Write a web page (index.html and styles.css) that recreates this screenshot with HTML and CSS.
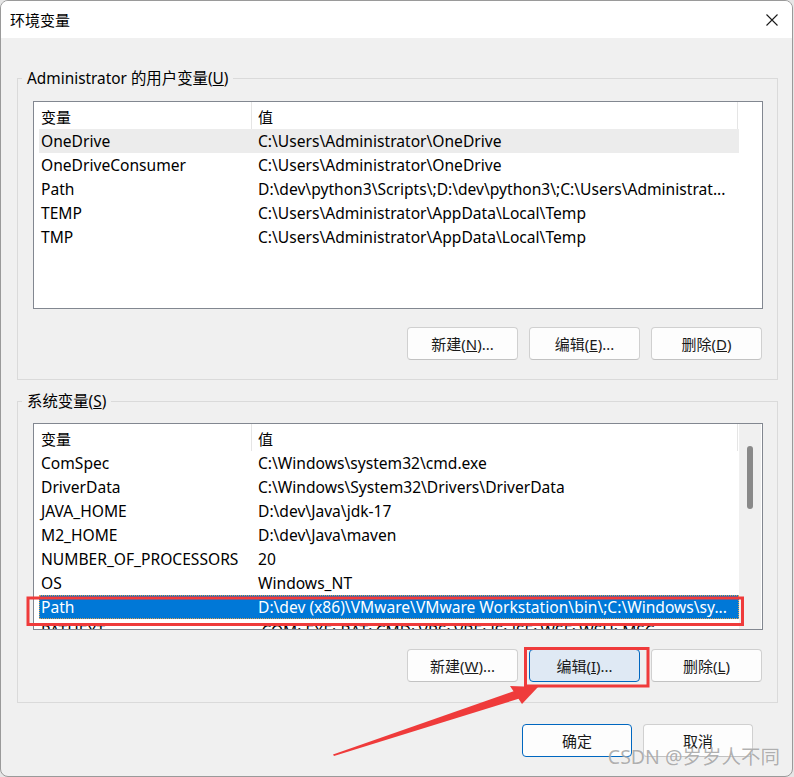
FILE: index.html
```html
<!DOCTYPE html>
<html lang="zh-CN">
<head>
<meta charset="utf-8">
<title>环境变量</title>
<link rel="stylesheet" href="styles.css">
</head>
<body>
<div class="window">
  <div class="titlebar">
    <span class="title">环境变量</span>
    <span class="close"><svg width="12" height="12" viewBox="0 0 12 12"><path d="M0.5 0.5 L11.5 11.5 M11.5 0.5 L0.5 11.5" stroke="#1a1a1a" stroke-width="1.1" fill="none"/></svg></span>
  </div>
  <div class="body">
    <fieldset class="group g1">
      <legend>Administrator 的用户变量(<u>U</u>)</legend>
      <div class="group-body">
        <div class="list l1">
          <div class="row head"><div class="c1">变量</div><div class="c2">值</div></div>
          <div class="row hover"><div class="c1">OneDrive</div><div class="c2">C:\Users\Administrator\OneDrive</div></div>
          <div class="row"><div class="c1">OneDriveConsumer</div><div class="c2">C:\Users\Administrator\OneDrive</div></div>
          <div class="row"><div class="c1">Path</div><div class="c2">D:\dev\python3\Scripts\;D:\dev\python3\;C:\Users\Administrat...</div></div>
          <div class="row"><div class="c1">TEMP</div><div class="c2">C:\Users\Administrator\AppData\Local\Temp</div></div>
          <div class="row"><div class="c1">TMP</div><div class="c2">C:\Users\Administrator\AppData\Local\Temp</div></div>
        </div>
        <div class="btns">
          <div class="btn">新建(<u>N</u>)...</div>
          <div class="btn">编辑(<u>E</u>)...</div>
          <div class="btn">删除(<u>D</u>)</div>
        </div>
      </div>
    </fieldset>
    <fieldset class="group g2">
      <legend>系统变量(<u>S</u>)</legend>
      <div class="group-body">
        <div class="list l2">
          <div class="list-content">
            <div class="row head"><div class="c1">变量</div><div class="c2">值</div></div>
            <div class="row"><div class="c1">ComSpec</div><div class="c2">C:\Windows\system32\cmd.exe</div></div>
            <div class="row"><div class="c1">DriverData</div><div class="c2">C:\Windows\System32\Drivers\DriverData</div></div>
            <div class="row"><div class="c1">JAVA_HOME</div><div class="c2">D:\dev\Java\jdk-17</div></div>
            <div class="row"><div class="c1">M2_HOME</div><div class="c2">D:\dev\Java\maven</div></div>
            <div class="row"><div class="c1">NUMBER_OF_PROCESSORS</div><div class="c2">20</div></div>
            <div class="row"><div class="c1">OS</div><div class="c2">Windows_NT</div></div>
            <div class="row selected"><div class="c1">Path</div><div class="c2">D:\dev (x86)\VMware\VMware Workstation\bin\;C:\Windows\sy...</div></div>
            <div class="row"><div class="c1">PATHEXT</div><div class="c2">.COM;.EXE;.BAT;.CMD;.VBS;.VBE;.JS;.JSE;.WSF;.WSH;.MSC</div></div>
          </div>
          <div class="scrollbar"><div class="thumb"></div></div>
        </div>
        <div class="btns">
          <div class="btn">新建(<u>W</u>)...</div>
          <div class="btn btn-hot">编辑(<u>I</u>)...</div>
          <div class="btn">删除(<u>L</u>)</div>
        </div>
      </div>
    </fieldset>
    <div class="dlg-btns">
      <div class="btn btn-default">确定</div>
      <div class="btn">取消</div>
    </div>
  </div>
  <svg class="annot" width="794" height="777" viewBox="0 0 794 777">
    <rect x="28" y="598" width="714.5" height="26.5" fill="none" stroke="#ef3b3b" stroke-width="3"/>
    <rect x="525.5" y="648.5" width="122.5" height="37.5" fill="none" stroke="#ef3b3b" stroke-width="3"/>
    <polygon points="333,754.5 517,690 521,698 334,756" fill="#ef3b3b"/>
    <polygon points="510,686 538,687 522,704" fill="#ef3b3b"/>
  </svg>
  <div class="watermark">CSDN @岁岁人不同</div>
</div>
</body>
</html>
```
FILE: styles.css
```css
* { box-sizing: border-box; }
html, body { margin: 0; padding: 0; }
body {
  background: #e6e6e6;
  font-family: "Noto Sans", "Noto Sans CJK SC", sans-serif;
  font-size: 15px;
  color: #000;
}
.window {
  position: relative;
  width: 793px;
  height: 777px;
  border: 1px solid #9a9a9a;
  border-radius: 8px;
  overflow: hidden;
  background: #f0f0f0;
  display: flex;
  flex-direction: column;
}
.titlebar {
  height: 37px;
  flex-shrink: 0;
  background: #fff;
  display: flex;
  align-items: center;
  justify-content: space-between;
  padding: 0 14px 0 9px;
}
.title {
  font-family: "Noto Sans CJK SC", sans-serif;
  font-size: 15px;
  color: #000;
}
.close { display: flex; }
.body {
  padding: 30px 0 0 16px;
}
.group {
  margin: 0;
  padding: 0;
  min-width: 0;
  width: 761px;
  border: 1px solid #dadada;
}
.group legend {
  margin-left: 4px;
  padding: 1px 5px 0;
  height: 20px;
  line-height: 20px;
  font-size: 15.4px;
}
.g2 { margin-top: 11px; }
.group-body {
  padding: 13px 14px 19px 15px;
}
.g2 .group-body { padding: 12px 14px 20px 15px; }
.list {
  height: 208px;
  border: 1px solid #828790;
  background: #fff;
  overflow: hidden;
}
.l2 {
  height: 207px;
  display: flex;
}
.list-content { width: 705px; overflow: hidden; }
.scrollbar {
  width: 22px;
  background: #f0f0f0;
  position: relative;
  padding: 22px 0 0 8px;
}
.thumb {
  width: 6px;
  height: 63px;
  background: #8a8a8a;
  border-radius: 3px;
}
.row {
  display: flex;
  align-items: center;
  height: 24px;
  width: 700px;
  margin-left: 5px;
  white-space: nowrap;
  font-size: 15.6px;
}
.row .c1 { width: 213px; padding-left: 2px; overflow: hidden; }
.row .c2 { width: 487px; padding-left: 6px; overflow: hidden; }
.row.head {
  height: 27px;
  width: 705px;
  margin-left: 0;
  align-items: stretch;
  font-size: 15px;
}
.row.head .c1, .row.head .c2 {
  display: flex;
  align-items: center;
  padding-top: 2px;
  border-right: 1px solid #e5e5e5;
}
.row.head .c1 { width: 218px; padding-left: 7px; }
.row.head .c2 { width: 486px; padding-left: 6px; }
.row.hover { background: #ececec; }
.row.selected {
  background: #0078d7;
  color: #fff;
  outline: 1px dotted #e0a050;
  outline-offset: -1px;
}
.btns {
  display: flex;
  justify-content: flex-end;
  gap: 11px;
  margin-top: 18px;
  padding-right: 1px;
}
.g2 .btns { margin-top: 19px; }
.btn {
  width: 111px;
  height: 33px;
  display: flex;
  align-items: center;
  justify-content: center;
  background: #fdfdfd;
  border: 1px solid #d0d0d0;
  border-bottom-color: #c2c2c2;
  border-radius: 4px;
  font-size: 15px;
  color: #1a1a1a;
}
.btn-hot {
  background: #dfe9f4;
  border-color: #0067c0;
}
.dlg-btns {
  display: flex;
  justify-content: flex-end;
  gap: 11px;
  margin-top: 21px;
  padding-right: 39px;
}
.dlg-btns .btn { width: 110px; }
.btn-default {
  border-color: #0067c0;
  background: #fdfdfd;
}
.annot {
  position: absolute;
  left: -1px;
  top: -1px;
  pointer-events: none;
}
.watermark {
  position: absolute;
  right: 12px;
  bottom: 6px;
  font-family: "Noto Sans", "Noto Sans CJK SC", sans-serif;
  font-size: 19.5px;
  color: rgba(110, 110, 110, 0.55);
  text-shadow: 0 0 1px rgba(255,255,255,0.8);
  white-space: nowrap;
}
```
